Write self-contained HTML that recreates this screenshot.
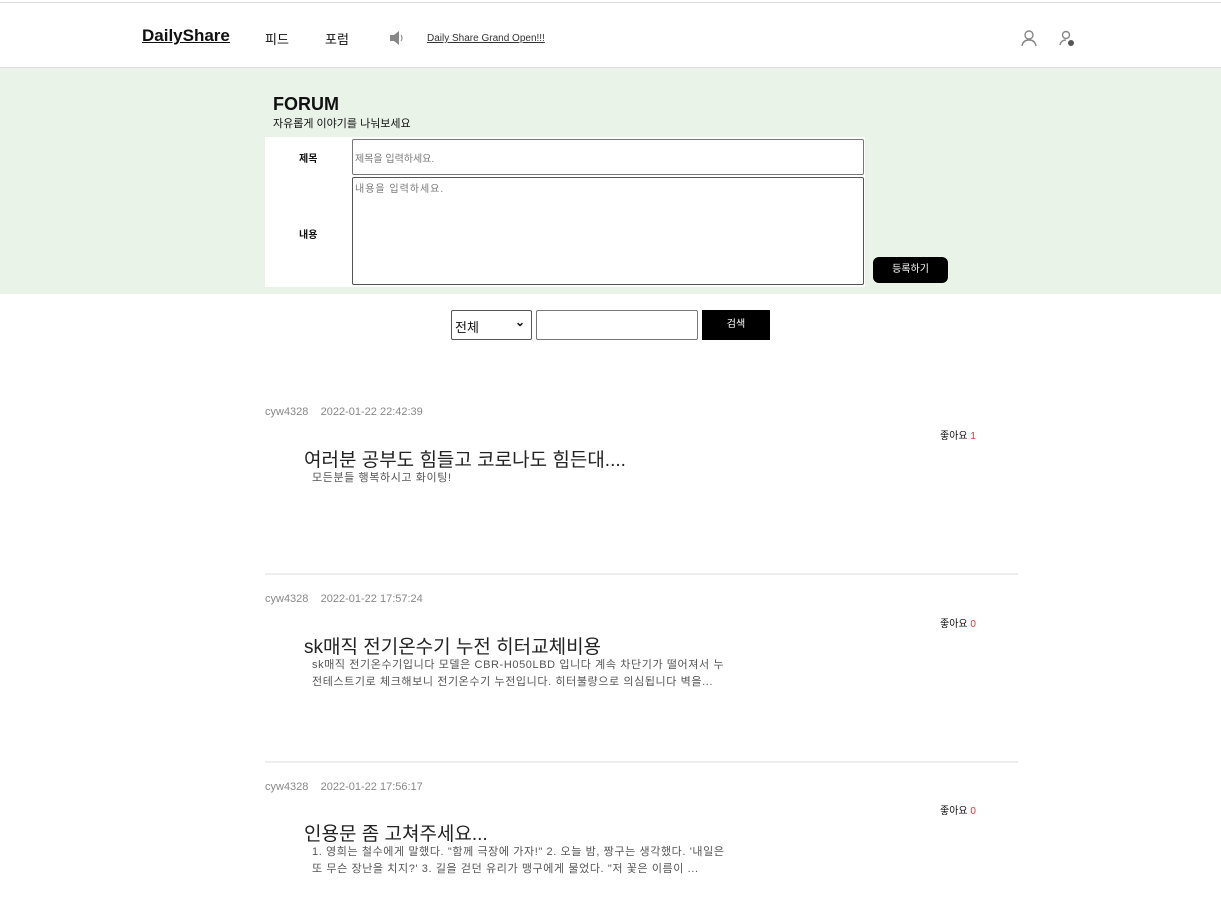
<!DOCTYPE html>
<html><head><meta charset="utf-8"><style>
*{box-sizing:border-box;margin:0;padding:0}
body{width:1221px;height:902px;overflow:hidden;background:#fff;font-family:"Liberation Sans","Noto Sans CJK KR",sans-serif;color:#111;position:relative}
.a{position:absolute}
.hd{top:2px;left:0;width:1221px;height:66px;border-top:1px solid #ddd;border-bottom:1px solid #ddd}
.gr{top:68px;left:0;width:1221px;height:226px;background:#e9f3e8}
.meta{font-size:11px;color:#888}
.like{font-size:10px;color:#111}
.like span{color:#e33}
.title{font-size:19px;color:#222}
.desc{font-size:11px;color:#555;line-height:17px;width:420px;letter-spacing:0.6px}
.hr{left:265px;width:753px;height:2px;background:#eee}
</style></head><body>
<div class="a hd"></div>
<div class="a" style="left:142px;top:26px;font-size:17px;font-weight:bold;text-decoration:underline">DailyShare</div>
<div class="a" style="left:265px;top:29px;font-size:13px">피드</div>
<div class="a" style="left:325px;top:29px;font-size:13px">포럼</div>
<svg class="a" style="left:389px;top:30px" width="16" height="16" viewBox="0 0 16 16"><path d="M1 5h4l5-4v14l-5-4H1z" fill="#888"/><path d="M12 5q2 3 0 6" stroke="#999" fill="none" stroke-width="1.3"/></svg>
<div class="a" style="left:427px;top:33px;font-size:10px;text-decoration:underline;color:#333">Daily Share Grand Open!!!</div>
<svg class="a" style="left:1020px;top:29px" width="18" height="18" viewBox="0 0 18 18" fill="none" stroke="#888" stroke-width="1.4"><circle cx="9" cy="6" r="4"/><path d="M2 17q1-6 7-6t7 6"/></svg>
<svg class="a" style="left:1058px;top:29px" width="18" height="18" viewBox="0 0 18 18"><g fill="none" stroke="#888" stroke-width="1.4"><circle cx="8" cy="6" r="3.5"/><path d="M2 16q1-5 6-5"/></g><circle cx="13" cy="14" r="3" fill="#555"/></svg>
<div class="a gr"></div>
<div class="a" style="left:273px;top:94px;font-size:18px;font-weight:bold">FORUM</div>
<div class="a" style="left:273px;top:115px;font-size:11px">자유롭게 이야기를 나눠보세요</div>
<div class="a" style="left:265px;top:137px;width:600px;height:150px;background:#fff"></div>
<div class="a" style="left:299px;top:150px;font-size:10px;font-weight:bold">제목</div>
<div class="a" style="left:299px;top:226px;font-size:10px;font-weight:bold">내용</div>
<div class="a" style="left:352px;top:139px;width:512px;height:36px;border:1px solid #777;border-radius:2px;font-size:10px;color:#777;padding:10px 2px">제목을 입력하세요.</div>
<div class="a" style="left:352px;top:177px;width:512px;height:108px;border:1px solid #555;border-radius:2px;font-size:10px;color:#777;padding:2px 2px;letter-spacing:1px">내용을 입력하세요.</div>
<div class="a" style="left:873px;top:257px;width:75px;height:26px;background:#000;border-radius:6px;color:#fff;font-size:10px;text-align:center;line-height:26px">등록하기</div>
<div class="a" style="left:451px;top:310px;width:81px;height:30px;border:1px solid #555;border-radius:2px;font-size:13px;padding:6px 3px">전체<span style="position:absolute;right:6px;top:4px;font-size:12px;font-weight:bold">⌄</span></div>
<div class="a" style="left:536px;top:310px;width:162px;height:30px;border:1px solid #777;border-radius:2px"></div>
<div class="a" style="left:702px;top:310px;width:68px;height:30px;background:#000;color:#fff;font-size:10px;text-align:center;line-height:30px">검색</div>

<div class="a meta" style="left:265px;top:406px">cyw4328 &nbsp;&nbsp; 2022-01-22 22:42:39</div>
<div class="a like" style="left:940px;top:427px">좋아요 <span>1</span></div>
<div class="a title" style="left:304px;top:445px">여러분 공부도 힘들고 코로나도 힘든대....</div>
<div class="a desc" style="left:312px;top:470px">모든분들 행복하시고 화이팅!</div>
<div class="a hr" style="top:573px"></div>

<div class="a meta" style="left:265px;top:593px">cyw4328 &nbsp;&nbsp; 2022-01-22 17:57:24</div>
<div class="a like" style="left:940px;top:615px">좋아요 <span>0</span></div>
<div class="a title" style="left:304px;top:632px">sk매직 전기온수기 누전 히터교체비용</div>
<div class="a desc" style="left:312px;top:657px">sk매직 전기온수기입니다 모델은 CBR-H050LBD 입니다 계속 차단기가 떨어져서 누전테스트기로 체크해보니 전기온수기 누전입니다. 히터불량으로 의심됩니다 벽을...</div>
<div class="a hr" style="top:761px"></div>

<div class="a meta" style="left:265px;top:781px">cyw4328 &nbsp;&nbsp; 2022-01-22 17:56:17</div>
<div class="a like" style="left:940px;top:802px">좋아요 <span>0</span></div>
<div class="a title" style="left:304px;top:819px">인용문 좀 고쳐주세요...</div>
<div class="a desc" style="left:312px;top:844px">1. 영희는 철수에게 말했다. "함께 극장에 가자!" 2. 오늘 밤, 짱구는 생각했다. '내일은 또 무슨 장난을 치지?' 3. 길을 걷던 유리가 맹구에게 물었다. "저 꽃은 이름이 ...</div>
</body></html>
